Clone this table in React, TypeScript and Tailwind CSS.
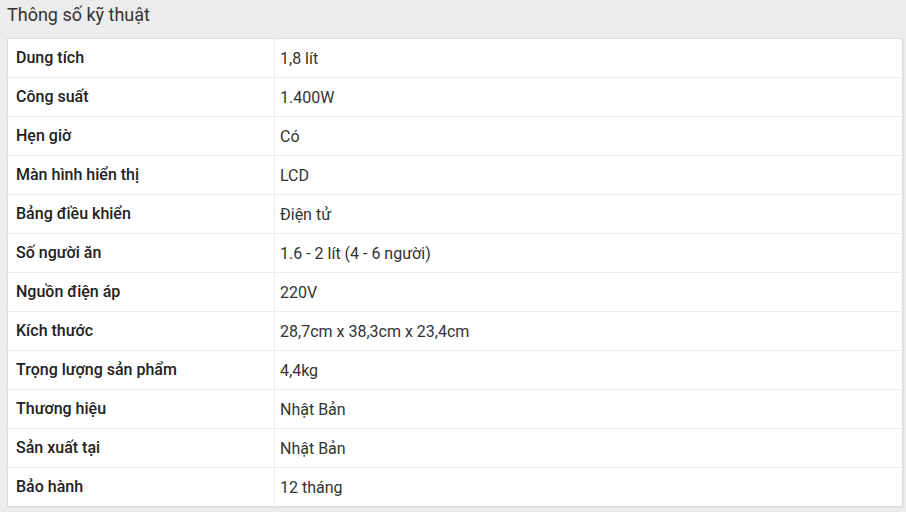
const specs: [string, string][] = [
  ["Dung tích", "1,8 lít"],
  ["Công suất", "1.400W"],
  ["Hẹn giờ", "Có"],
  ["Màn hình hiển thị", "LCD"],
  ["Bảng điều khiển", "Điện tử"],
  ["Số người ăn", "1.6 - 2 lít (4 - 6 người)"],
  ["Nguồn điện áp", "220V"],
  ["Kích thước", "28,7cm x 38,3cm x 23,4cm"],
  ["Trọng lượng sản phẩm", "4,4kg"],
  ["Thương hiệu", "Nhật Bản"],
  ["Sản xuất tại", "Nhật Bản"],
  ["Bảo hành", "12 tháng"],
];

export default function App() {
  return (
    <div className="w-[906px] h-[512px] bg-[#ececec] px-[7px] pt-[3px] font-['Roboto',sans-serif] overflow-hidden">
      <h2 className="text-[18px] leading-[24px] text-[#333] h-[35px]">Thông số kỹ thuật</h2>
      <table className="w-[896px] border-collapse bg-white border border-[#dcdcdc] shadow-[1px_1px_0_#e2e2e2]">
        <tbody>
          {specs.map(([label, value]) => (
            <tr key={label} className="h-[39px] border-b border-[#ebebeb] last:border-b-0">
              <td className="w-[267px] pl-[8px] text-[16px] leading-[20px] font-medium text-[#222] border-r border-[#ebebeb] align-middle">
                {label}
              </td>
              <td className="pl-[5px] pt-[1px] text-[16px] leading-[20px] text-[#333] align-middle">{value}</td>
            </tr>
          ))}
        </tbody>
      </table>
    </div>
  );
}
